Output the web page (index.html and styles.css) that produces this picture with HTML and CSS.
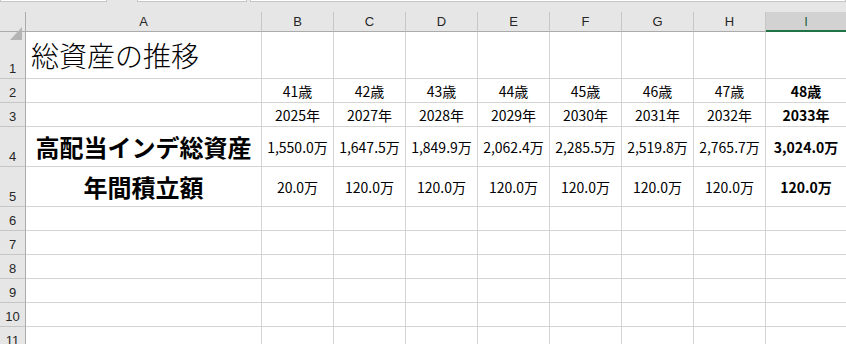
FILE: index.html
```html
<!DOCTYPE html>
<html lang="ja">
<head>
    <meta charset="UTF-8">
    <meta name="viewport" content="width=device-width, initial-scale=1.0">
    <title>総資産の推移</title>
    <link rel="stylesheet" href="styles.css">
</head>
<body>
    <!-- 数式バーの下端 -->
    <div class="topbar">
        <div class="box name-box"></div>
        <div class="box fx-box"></div>
        <div class="box formula-box"></div>
    </div>

    <div class="sheet">
        <!-- 列見出し -->
        <div class="corner"></div>
        <div class="ch">A</div>
        <div class="ch">B</div>
        <div class="ch">C</div>
        <div class="ch">D</div>
        <div class="ch">E</div>
        <div class="ch">F</div>
        <div class="ch">G</div>
        <div class="ch">H</div>
        <div class="ch selected">I</div>

        <!-- 1行目 -->
        <div class="rh">1</div>
        <div class="cell title">総資産の推移</div>
        <div class="cell"></div><div class="cell"></div><div class="cell"></div><div class="cell"></div>
        <div class="cell"></div><div class="cell"></div><div class="cell"></div><div class="cell"></div>

        <!-- 2行目: 年齢 -->
        <div class="rh">2</div>
        <div class="cell"></div>
        <div class="cell">41歳</div>
        <div class="cell">42歳</div>
        <div class="cell">43歳</div>
        <div class="cell">44歳</div>
        <div class="cell">45歳</div>
        <div class="cell">46歳</div>
        <div class="cell">47歳</div>
        <div class="cell bold">48歳</div>

        <!-- 3行目: 年 -->
        <div class="rh">3</div>
        <div class="cell"></div>
        <div class="cell">2025年</div>
        <div class="cell">2027年</div>
        <div class="cell">2028年</div>
        <div class="cell">2029年</div>
        <div class="cell">2030年</div>
        <div class="cell">2031年</div>
        <div class="cell">2032年</div>
        <div class="cell bold">2033年</div>

        <!-- 4行目: 総資産 -->
        <div class="rh">4</div>
        <div class="cell label">高配当インデ総資産</div>
        <div class="cell">1,550.0万</div>
        <div class="cell">1,647.5万</div>
        <div class="cell">1,849.9万</div>
        <div class="cell">2,062.4万</div>
        <div class="cell">2,285.5万</div>
        <div class="cell">2,519.8万</div>
        <div class="cell">2,765.7万</div>
        <div class="cell bold">3,024.0万</div>

        <!-- 5行目: 積立額 -->
        <div class="rh">5</div>
        <div class="cell label">年間積立額</div>
        <div class="cell">20.0万</div>
        <div class="cell">120.0万</div>
        <div class="cell">120.0万</div>
        <div class="cell">120.0万</div>
        <div class="cell">120.0万</div>
        <div class="cell">120.0万</div>
        <div class="cell">120.0万</div>
        <div class="cell bold">120.0万</div>

        <!-- 空行 -->
        <div class="rh">6</div>
        <div class="cell"></div><div class="cell"></div><div class="cell"></div><div class="cell"></div><div class="cell"></div>
        <div class="cell"></div><div class="cell"></div><div class="cell"></div><div class="cell"></div>
        <div class="rh">7</div>
        <div class="cell"></div><div class="cell"></div><div class="cell"></div><div class="cell"></div><div class="cell"></div>
        <div class="cell"></div><div class="cell"></div><div class="cell"></div><div class="cell"></div>
        <div class="rh">8</div>
        <div class="cell"></div><div class="cell"></div><div class="cell"></div><div class="cell"></div><div class="cell"></div>
        <div class="cell"></div><div class="cell"></div><div class="cell"></div><div class="cell"></div>
        <div class="rh">9</div>
        <div class="cell"></div><div class="cell"></div><div class="cell"></div><div class="cell"></div><div class="cell"></div>
        <div class="cell"></div><div class="cell"></div><div class="cell"></div><div class="cell"></div>
        <div class="rh">10</div>
        <div class="cell"></div><div class="cell"></div><div class="cell"></div><div class="cell"></div><div class="cell"></div>
        <div class="cell"></div><div class="cell"></div><div class="cell"></div><div class="cell"></div>
        <div class="rh">11</div>
        <div class="cell"></div><div class="cell"></div><div class="cell"></div><div class="cell"></div><div class="cell"></div>
        <div class="cell"></div><div class="cell"></div><div class="cell"></div><div class="cell"></div>
    </div>
</body>
</html>
```

FILE: styles.css
```css
body {
    margin: 0;
    width: 846px;
    height: 344px;
    overflow: hidden;
    background: #fff;
    color: #000;
    font-family: 'Noto Sans CJK JP', sans-serif;
}

.topbar {
    height: 12px;
    background: #e6e6e6;
    display: flex;
    align-items: flex-start;
}

.box {
    height: 1px;
    background: #fff;
    border: 1px solid #c6c6c6;
    border-top: none;
}

.name-box {
    width: 105px;
}

.fx-box {
    width: 108px;
    margin-left: 30px;
}

.formula-box {
    flex: 1;
    margin-left: 3px;
}

.sheet {
    display: grid;
    grid-template-columns: 26px 236px repeat(7, 72px) 81px;
    grid-template-rows: 20px 47px 24px 24px 40px 40px repeat(6, 24px);
}

.sheet > div {
    box-sizing: border-box;
    display: flex;
    align-items: center;
    justify-content: center;
    white-space: nowrap;
}

/* 見出し */
.corner {
    position: relative;
    background: #e6e6e6;
    border-right: 1px solid #ababab;
    border-bottom: 1px solid #ababab;
}

.corner::after {
    content: "";
    position: absolute;
    left: 10px;
    top: 15px;
    width: 12px;
    height: 13px;
    background: #b4b4b4;
    clip-path: polygon(100% 0, 100% 100%, 0 100%);
}

.ch {
    background: #e6e6e6;
    border-right: 1px solid #c6c6c6;
    border-bottom: 1px solid #ababab;
    font-family: 'Liberation Sans', sans-serif;
    font-size: 13px;
    color: #262626;
}

.ch.selected {
    background: #d2d2d2;
    border-bottom: 2px solid #217346;
    color: #1e5f39;
}

.rh {
    background: #e6e6e6;
    border-right: 1px solid #ababab;
    border-bottom: 1px solid #c6c6c6;
    font-family: 'Liberation Sans', sans-serif;
    font-size: 13px;
    color: #262626;
    align-items: flex-end !important;
    padding-bottom: 2px;
}

/* セル */
.cell {
    border-right: 1px solid #d4d4d4;
    border-bottom: 1px solid #d4d4d4;
    font-size: 14px;
}

.cell.bold {
    font-weight: bold;
}

.cell.title {
    justify-content: flex-start;
    padding-left: 5px;
    font-size: 28px;
    font-weight: 300;
}

.cell.label {
    font-size: 24px;
    font-weight: bold;
}
```
